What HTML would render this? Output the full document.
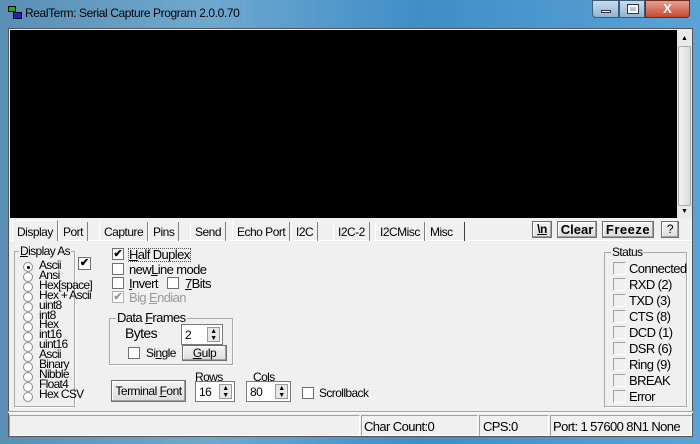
<!DOCTYPE html><html><head><style>
*{margin:0;padding:0;box-sizing:border-box}
body{width:700px;height:444px;overflow:hidden;position:relative;font-family:"Liberation Sans",sans-serif;font-size:12px;color:#000;
background:linear-gradient(90deg,#5a8fb4 0%,#6fa8cf 30%,#3f8ec8 60%,#5aa3d6 100%)}
.a{position:absolute}
.t{position:absolute;white-space:nowrap;letter-spacing:-0.6px;line-height:12px;font-size:12px}
.cb{position:absolute;width:12px;height:12px;border:1px solid #707070;background:#fff}
.rb{position:absolute;width:10px;height:10px;border:1px solid #8a8a8a;border-radius:50%;background:#fff}
.btn{position:absolute;border:1px solid #707070;background:linear-gradient(#f4f4f4,#dcdcdc);box-shadow:inset -1px -1px 0 #a0a0a0,inset 1px 1px 0 #fff;text-align:center;letter-spacing:-0.5px}
.grp{position:absolute;border:1px solid #a8a8a8;box-shadow:1px 1px 0 #fff}
.gl{position:absolute;background:#f0f0f0;padding:0 1px;top:-7px;left:6px;line-height:12px;letter-spacing:-0.6px}
.tab{position:absolute;top:222px;height:19px;border-right:1px solid #808080;border-left:1px solid #fff;padding:3px 4px 0;letter-spacing:-0.5px;white-space:nowrap;font-size:12px}
.ed{position:absolute;border:1px solid #7a7a7a;background:#fff;height:21px;padding:3px 3px;letter-spacing:-0.5px;font-size:12px}
.sp{position:absolute;right:2px;top:2px;width:13px;height:15px;border:1px solid #999;background:#e8e8e8;font-size:7px;line-height:7px;text-align:center}
.st{position:absolute;width:13px;height:13px;border:1px solid #a0a0a0;border-right-color:#fff;border-bottom-color:#fff;background:#f0f0f0}
</style></head><body>
<div class="a" style="left:8px;top:6px;width:14px;height:14px"><div class="a" style="left:0;top:0;width:8px;height:6px;background:#2a2;border:1px solid #000"></div><div class="a" style="left:5px;top:6px;width:9px;height:7px;background:#22c;border:1px solid #000"></div></div>
<div class="t" style="left:25px;top:7px;font-size:12px;letter-spacing:-0.4px">RealTerm: Serial Capture Program 2.0.0.70</div>
<div class="a" style="left:592px;top:0;width:27px;height:18px;border:1px solid #3a5c7a;border-radius:0 0 0 4px;background:linear-gradient(#c9dced,#8fb3d3)"><div class="a" style="left:8px;top:9px;width:10px;height:3px;background:#fff;border:1px solid #334"></div></div>
<div class="a" style="left:619px;top:0;width:26px;height:18px;border:1px solid #3a5c7a;background:linear-gradient(#c9dced,#8fb3d3)"><div class="a" style="left:8px;top:4px;width:10px;height:8px;border:2px solid #fff;outline:1px solid #334"></div></div>
<div class="a" style="left:645px;top:0;width:45px;height:18px;border:1px solid #6a2a20;border-radius:0 0 4px 0;background:linear-gradient(#e8a090,#c44a30);color:#fff;font-weight:bold;text-align:center;font-size:13px;line-height:16px">X</div>
<div class="a" style="left:8px;top:28px;width:685px;height:409px;background:#f0f0f0;border:1px solid #555"></div>
<div class="a" style="left:10px;top:30px;width:667px;height:188px;background:#000"></div>
<div class="a" style="left:677px;top:30px;width:15px;height:188px;background:#eaeaea">
<div class="a" style="left:4px;top:5px;font-size:7px">▲</div>
<div class="a" style="left:1px;top:16px;width:13px;height:160px;border:1px solid #aaa;border-radius:2px;background:linear-gradient(90deg,#f4f4f4,#dcdcdc)"></div>
<div class="a" style="left:4px;top:178px;font-size:7px">▼</div></div>
<div class="a" style="left:10px;top:240px;width:682px;height:1px;background:#fff"></div>
<div class="tab" style="left:12px;top:220px;height:21px;padding-top:4px;background:#f0f0f0;border-top:1px solid #fff">Display</div>
<div class="tab" style="left:58px">Port</div>
<div class="tab" style="left:99px">Capture</div>
<div class="tab" style="left:148px">Pins</div>
<div class="tab" style="left:190px">Send</div>
<div class="tab" style="left:232px">Echo Port</div>
<div class="tab" style="left:291px">I2C</div>
<div class="tab" style="left:333px">I2C-2</div>
<div class="tab" style="left:375px">I2CMisc</div>
<div class="tab" style="left:425px;border-right:1px solid #404040;width:40px">Misc</div>
<div class="btn" style="left:532px;top:221px;width:20px;height:17px;font-weight:bold;font-size:12px;line-height:15px"><u>\n</u></div>
<div class="btn" style="left:557px;top:221px;width:40px;height:17px;font-weight:bold;font-size:13px;line-height:15px;letter-spacing:0">Clear</div>
<div class="btn" style="left:602px;top:221px;width:52px;height:17px;font-weight:bold;font-size:13px;line-height:15px;letter-spacing:0.5px">Freeze</div>
<div class="btn" style="left:661px;top:221px;width:18px;height:17px;font-size:12px;line-height:15px">?</div>
<div class="grp" style="left:14px;top:251px;width:61px;height:156px"><div class="gl" style="left:4px"><u>D</u>isplay As</div></div>
<div class="cb" style="left:78px;top:257px;width:13px;height:13px;font-size:11px;line-height:11px;text-align:center;font-weight:bold">✔</div>
<div class="rb" style="left:23px;top:262px"><div class="a" style="left:3px;top:3px;width:3px;height:3px;background:#000;border-radius:50%"></div></div>
<div class="rb" style="left:23px;top:272px"></div><div class="rb" style="left:23px;top:282px"></div><div class="rb" style="left:23px;top:292px"></div><div class="rb" style="left:23px;top:302px"></div><div class="rb" style="left:23px;top:312px"></div><div class="rb" style="left:23px;top:322px"></div><div class="rb" style="left:23px;top:332px"></div><div class="rb" style="left:23px;top:342px"></div><div class="rb" style="left:23px;top:352px"></div><div class="rb" style="left:23px;top:362px"></div><div class="rb" style="left:23px;top:372px"></div><div class="rb" style="left:23px;top:382px"></div><div class="rb" style="left:23px;top:392px"></div>
<div class="t" style="left:39px;top:261px;line-height:9.9px;font-size:12px;letter-spacing:-0.7px">Ascii<br>Ansi<br>Hex[space]<br>Hex + Ascii<br>uint8<br>int8<br>Hex<br>int16<br>uint16<br>Ascii<br>Binary<br>Nibble<br>Float4<br>Hex CSV</div>
<div class="cb" style="left:112px;top:248px;font-size:11px;line-height:10px;text-align:center;font-weight:bold">✔</div>
<div class="t" style="left:129px;top:249px;font-size:13px;outline:1px dotted #555"><u>H</u>alf Duplex</div>
<div class="cb" style="left:112px;top:263px"></div><div class="t" style="left:129px;top:264px;font-size:13px">new<u>L</u>ine mode</div>
<div class="cb" style="left:112px;top:277px"></div><div class="t" style="left:129px;top:278px;font-size:13px"><u>I</u>nvert</div>
<div class="cb" style="left:167px;top:277px"></div><div class="t" style="left:185px;top:278px;font-size:13px"><u>7</u>Bits</div>
<div class="cb" style="left:112px;top:291px;border-color:#b0b0b0;color:#999;font-size:11px;line-height:10px;text-align:center;font-weight:bold">✔</div><div class="t" style="left:129px;top:292px;font-size:13px;color:#999">Big <u>E</u>ndian</div>
<div class="grp" style="left:109px;top:318px;width:124px;height:47px"><div class="gl" style="left:6px;font-size:13px">Data <u>F</u>rames</div></div>
<div class="t" style="left:125px;top:327px;font-size:14px">Bytes</div>
<div class="ed" style="left:181px;top:324px;width:42px">2<div class="sp">▲<br>▼</div></div>
<div class="cb" style="left:128px;top:347px"></div><div class="t" style="left:146px;top:347px">Si<u>n</u>gle</div>
<div class="btn" style="left:182px;top:345px;width:45px;height:16px;line-height:14px"><u>G</u>ulp</div>
<div class="btn" style="left:111px;top:380px;width:75px;height:22px;line-height:20px">Terminal <u>F</u>ont</div>
<div class="t" style="left:195px;top:371px">Rows</div>
<div class="t" style="left:253px;top:371px">Cols</div>
<div class="ed" style="left:195px;top:381px;width:40px">16<div class="sp">▲<br>▼</div></div>
<div class="ed" style="left:246px;top:381px;width:45px">80<div class="sp">▲<br>▼</div></div>
<div class="cb" style="left:302px;top:387px"></div><div class="t" style="left:319px;top:387px;font-size:12px">Scrollback</div>
<div class="grp" style="left:604px;top:252px;width:83px;height:155px"><div class="gl" style="left:6px;font-size:12px">Status</div></div>
<div class="st" style="left:613px;top:262px"></div><div class="t" style="left:629px;top:263px;font-size:13px">Connected</div>
<div class="st" style="left:613px;top:278px"></div><div class="t" style="left:629px;top:279px;font-size:13px">RXD (2)</div>
<div class="st" style="left:613px;top:294px"></div><div class="t" style="left:629px;top:295px;font-size:13px">TXD (3)</div>
<div class="st" style="left:613px;top:310px"></div><div class="t" style="left:629px;top:311px;font-size:13px">CTS (8)</div>
<div class="st" style="left:613px;top:326px"></div><div class="t" style="left:629px;top:327px;font-size:13px">DCD (1)</div>
<div class="st" style="left:613px;top:342px"></div><div class="t" style="left:629px;top:343px;font-size:13px">DSR (6)</div>
<div class="st" style="left:613px;top:358px"></div><div class="t" style="left:629px;top:359px;font-size:13px">Ring (9)</div>
<div class="st" style="left:613px;top:374px"></div><div class="t" style="left:629px;top:375px;font-size:13px">BREAK</div>
<div class="st" style="left:613px;top:390px"></div><div class="t" style="left:629px;top:391px;font-size:13px">Error</div>
<div class="a" style="left:8px;top:411px;width:685px;height:2px;border-top:1px solid #a0a0a0;border-bottom:1px solid #fff"></div>
<div class="a" style="left:9px;top:415px;width:351px;height:21px;border:1px solid #a0a0a0;border-right-color:#fff;border-bottom-color:#fff"></div>
<div class="a" style="left:361px;top:415px;width:117px;height:21px;border:1px solid #a0a0a0;border-right-color:#fff;border-bottom-color:#fff"></div>
<div class="t" style="left:364px;top:421px;font-size:13px">Char Count:0</div>
<div class="a" style="left:479px;top:415px;width:70px;height:21px;border:1px solid #a0a0a0;border-right-color:#fff;border-bottom-color:#fff"></div>
<div class="t" style="left:483px;top:421px;font-size:13px">CPS:0</div>
<div class="a" style="left:550px;top:415px;width:142px;height:21px;border:1px solid #a0a0a0;border-right-color:#fff;border-bottom-color:#fff"></div>
<div class="t" style="left:553px;top:421px;font-size:13px">Port: 1 57600 8N1 None</div>
</body></html>
